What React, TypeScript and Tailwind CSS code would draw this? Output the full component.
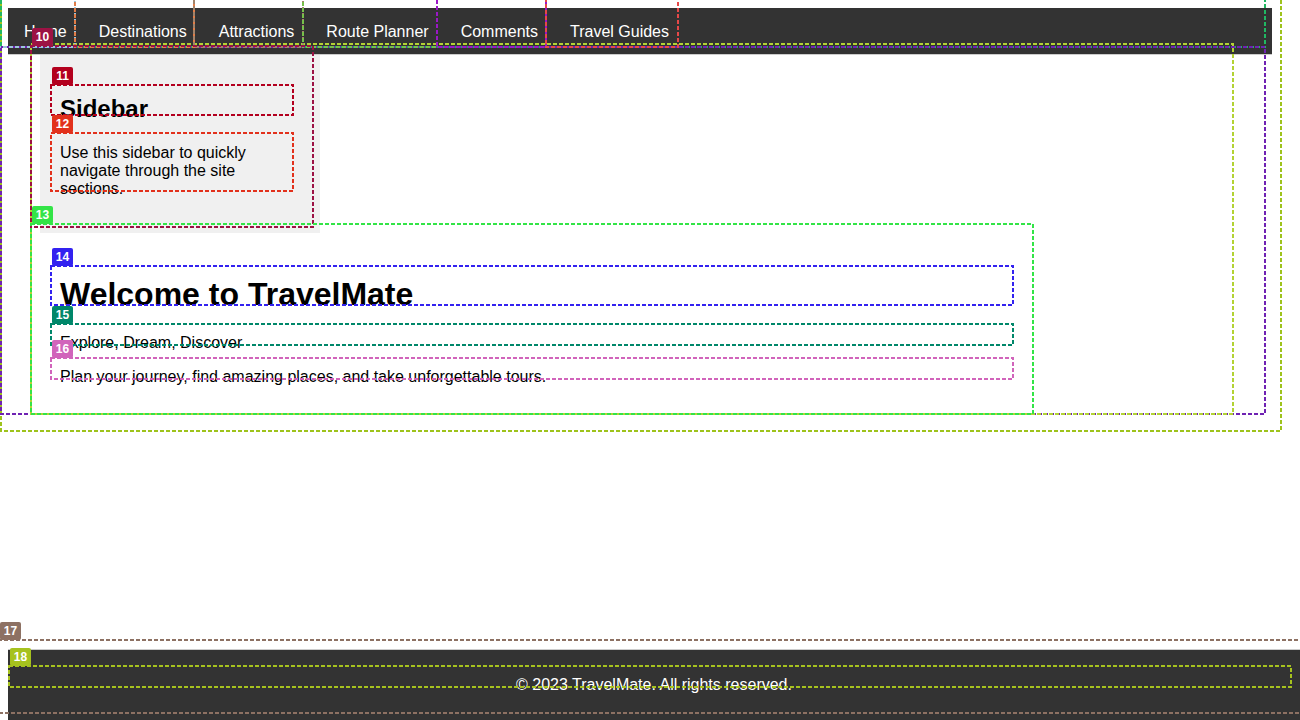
import React from 'react'

type Box = {
    x: number
    y: number
    w: number
    h: number
    color: string
    label?: string
}

// debug outlines drawn over the page
const boxes: Box[] = [
    { x: 1, y: -10, w: 1280, h: 441, color: '#9ec31c' },
    { x: 1, y: -10, w: 1264, h: 57, color: '#20b862' },
    { x: 1, y: 47, w: 1264, h: 367, color: '#6f22b3' },
    { x: 31, y: 44, w: 1202, h: 370, color: '#b3d234' },
    { x: -10, y: -10, w: 85, h: 57, color: '#9cc6dc' },
    { x: 75, y: -10, w: 119, h: 57, color: '#e07d48' },
    { x: 194, y: -10, w: 109, h: 57, color: '#a2836a' },
    { x: 303, y: -10, w: 134, h: 57, color: '#76c04a' },
    { x: 437, y: -10, w: 109, h: 57, color: '#9a18c6' },
    { x: 546, y: -10, w: 132, h: 57, color: '#e64848' },
    { x: 31, y: 46, w: 282, h: 181, color: '#9c1244', label: '10' },
    { x: 51, y: 85, w: 242, h: 30, color: '#b3001e', label: '11' },
    { x: 51, y: 133, w: 242, h: 58, color: '#e2311c', label: '12' },
    { x: 31, y: 224, w: 1002, h: 190, color: '#33e447', label: '13' },
    { x: 51, y: 266, w: 962, h: 39, color: '#3322f0', label: '14' },
    { x: 51, y: 324, w: 962, h: 21, color: '#00876a', label: '15' },
    { x: 51, y: 358, w: 962, h: 21, color: '#d164bb', label: '16' },
    { x: -2, y: 640, w: 1310, h: 73, color: '#8d7163', label: '17' },
    { x: 9, y: 666, w: 1282, h: 21, color: '#a6c21e', label: '18' },
]

const links = ['Home', 'Destinations', 'Attractions', 'Route Planner', 'Comments', 'Travel Guides']

function Overlay() {
    return (
        <>
            <svg
                className="absolute left-0 top-0 pointer-events-none"
                width={1300}
                height={720}
                viewBox="0 0 1300 720"
                aria-hidden
            >
                {boxes.map((b, i) => (
                    <rect
                        key={i}
                        x={b.x}
                        y={b.y}
                        width={b.w}
                        height={b.h}
                        fill="none"
                        stroke={b.color}
                        strokeWidth={2}
                        strokeDasharray="4 2"
                    />
                ))}
            </svg>
            {boxes
                .filter((b) => b.label)
                .map((b) => (
                    <div
                        key={b.label}
                        className="absolute h-[18px] w-[21px] rounded-[2px] text-center text-[12px] font-bold leading-[18px] text-white"
                        style={{ left: Math.max(b.x + 1, 0), top: b.y - 18, backgroundColor: b.color }}
                    >
                        {b.label}
                    </div>
                ))}
        </>
    )
}

export default function App() {
    return (
        <div className="relative flex h-[720px] w-[1300px] flex-col overflow-hidden bg-white font-['Liberation_Sans',Arial,sans-serif] text-[16px] text-black">
            <nav className="ml-2 mt-2 flex w-[1264px] border-b border-[#cccccc] bg-[#333333]">
                {links.map((l) => (
                    <a key={l} className="px-4 pb-[13px] pt-[15px] leading-[18px] text-white">
                        {l}
                    </a>
                ))}
            </nav>

            <div className="pl-10">
                <aside className="w-[280px] bg-[#f0f0f0] p-5">
                    <h2 className="mb-[21px] mt-5 text-[24px] font-bold leading-[28px]">Sidebar</h2>
                    <p className="mb-[15px] mt-4 leading-[18px]">
                        Use this sidebar to quickly navigate through the site sections.
                    </p>
                </aside>
                <main className="pl-5 pt-[22px]">
                    <h1 className="my-[21px] text-[32px] font-bold leading-[37px]">Welcome to TravelMate</h1>
                    <p className="my-4 leading-[18px]">Explore, Dream, Discover</p>
                    <p className="my-4 leading-[18px]">
                        Plan your journey, find amazing places, and take unforgettable tours.
                    </p>
                </main>
            </div>

            <footer className="ml-2 mt-auto h-[71px] w-[1292px] shrink-0 border-t border-[#cccccc] bg-[#333333] pt-[26px] text-center leading-[18px] text-white">
                © 2023 TravelMate. All rights reserved.
            </footer>

            <Overlay />
        </div>
    )
}
